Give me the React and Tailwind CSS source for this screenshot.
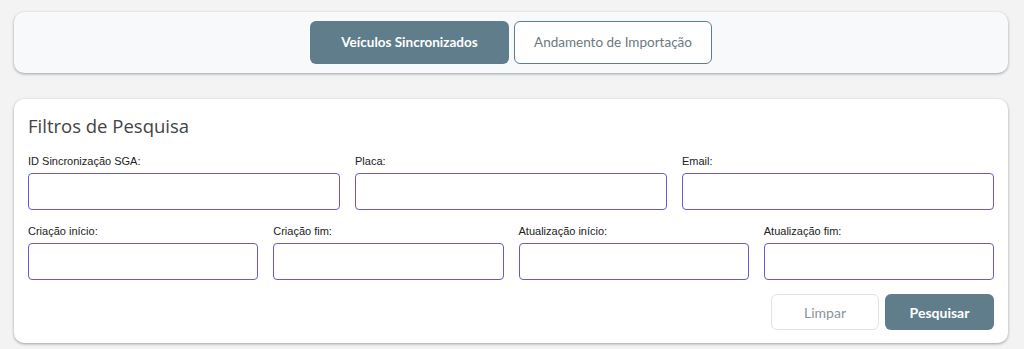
const rowOne = ['ID Sincronização SGA:', 'Placa:', 'Email:']
const rowTwo = ['Criação início:', 'Criação fim:', 'Atualização início:', 'Atualização fim:']

function Field({ label }) {
  return (
    <div className="flex flex-col">
      <label className="mb-[5px] h-[13px] font-['Liberation_Sans',Arial,sans-serif] text-[11px] leading-[13px] text-[#222]">
        {label}
      </label>
      <input
        type="text"
        className="h-[37px] w-full rounded-[4px] border border-[#6a5acd] bg-white px-2 outline-none"
      />
    </div>
  )
}

export default function App() {
  return (
    <div className="min-h-[349px] bg-[#f3f3f3] pl-[14px] pr-[16px] pt-[12px] font-['Lato',sans-serif]">
      <div className="flex h-[61px] items-center justify-center gap-[5px] rounded-[10px] bg-[#f8f9fa] shadow-[0_1px_3px_rgba(0,0,0,0.35)]">
        <button className="h-[43px] w-[199px] rounded-[6px] bg-[#607d8b] text-[13.5px] font-bold text-white">
          Veículos Sincronizados
        </button>
        <button className="h-[43px] w-[198px] rounded-[6px] border border-[#607d8b] bg-white text-[13.5px] text-[#6b7a82]">
          Andamento de Importação
        </button>
      </div>

      <div className="mt-[26px] rounded-[10px] bg-white px-[14px] pb-[13px] pt-[16px] shadow-[0_1px_3px_rgba(0,0,0,0.35)]">
        <h2 className="mb-[18px] font-['Open_Sans',sans-serif] text-[18.5px] leading-[22px] text-[#444]">
          Filtros de Pesquisa
        </h2>
        <div className="grid grid-cols-3 gap-[15px]">
          {rowOne.map((l) => (
            <Field key={l} label={l} />
          ))}
        </div>
        <div className="mt-[15px] grid grid-cols-4 gap-[15px]">
          {rowTwo.map((l) => (
            <Field key={l} label={l} />
          ))}
        </div>
        <div className="mt-[14px] flex justify-end gap-[6px]">
          <button className="h-[36px] w-[108px] rounded-[6px] border border-[#e3e3e3] bg-white text-[14px] text-[#8a949a]">
            Limpar
          </button>
          <button className="h-[36px] w-[109px] rounded-[6px] bg-[#607d8b] text-[14px] font-bold text-white">
            Pesquisar
          </button>
        </div>
      </div>
    </div>
  )
}
